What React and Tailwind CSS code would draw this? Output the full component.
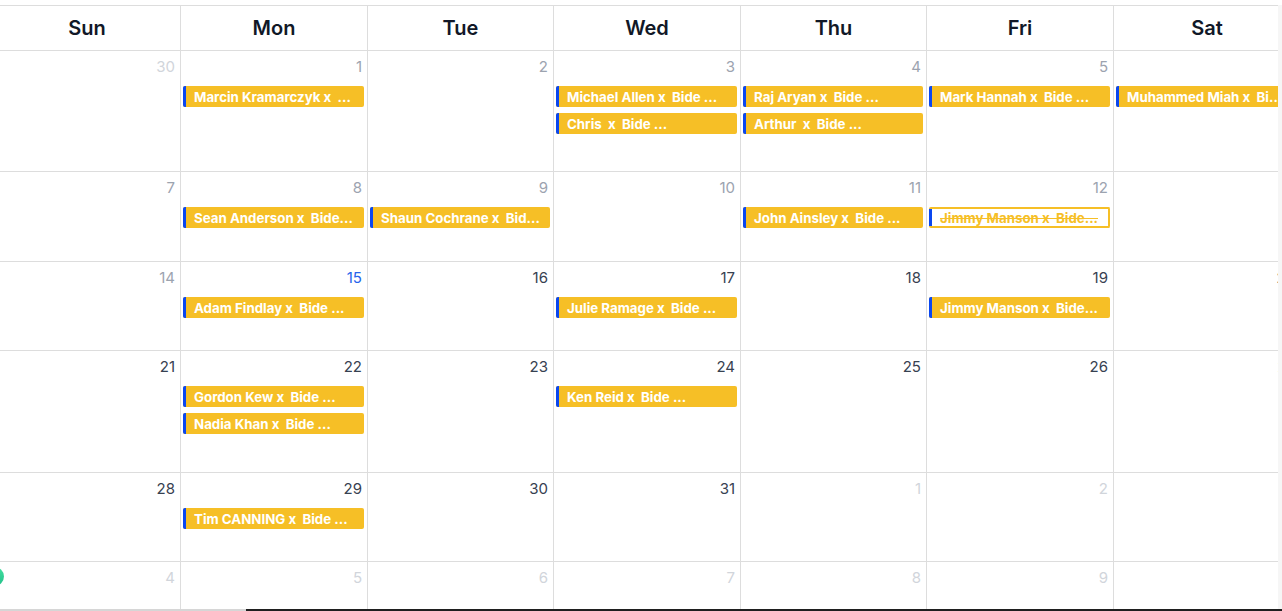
import React from "react";

const DAYS = ["Sun", "Mon", "Tue", "Wed", "Thu", "Fri", "Sat"];

// kind: o = other month, p = past, t = today, f = future
const WEEKS = [
  {
    h: "h-[121px]",
    days: [
      { n: 30, k: "o" },
      { n: 1, k: "p", ev: ["Marcin Kramarczyk x  ..."] },
      { n: 2, k: "p" },
      { n: 3, k: "p", ev: ["Michael Allen x  Bide ...", "Chris  x  Bide ..."] },
      { n: 4, k: "p", ev: ["Raj Aryan x  Bide ...", "Arthur  x  Bide ..."] },
      { n: 5, k: "p", ev: ["Mark Hannah x  Bide ..."] },
      { n: 6, k: "p", ev: ["Muhammed Miah x  Bi.."] },
    ],
  },
  {
    h: "h-[90px]",
    days: [
      { n: 7, k: "p" },
      { n: 8, k: "p", ev: ["Sean Anderson x  Bide..."] },
      { n: 9, k: "p", ev: ["Shaun Cochrane x  Bid..."] },
      { n: 10, k: "p" },
      { n: 11, k: "p", ev: ["John Ainsley x  Bide ..."] },
      { n: 12, k: "p", ev: [{ t: "Jimmy Manson x  Bide...", x: true }] },
      { n: 13, k: "p" },
    ],
  },
  {
    h: "h-[89px]",
    days: [
      { n: 14, k: "p" },
      { n: 15, k: "t", ev: ["Adam Findlay x  Bide ..."] },
      { n: 16, k: "f" },
      { n: 17, k: "f", ev: ["Julie Ramage x  Bide ..."] },
      { n: 18, k: "f" },
      { n: 19, k: "f", ev: ["Jimmy Manson x  Bide..."] },
      { n: 20, k: "f" },
    ],
  },
  {
    h: "h-[122px]",
    days: [
      { n: 21, k: "f" },
      { n: 22, k: "f", ev: ["Gordon Kew x  Bide ...", "Nadia Khan x  Bide ..."] },
      { n: 23, k: "f" },
      { n: 24, k: "f", ev: ["Ken Reid x  Bide ..."] },
      { n: 25, k: "f" },
      { n: 26, k: "f" },
      { n: 27, k: "f" },
    ],
  },
  {
    h: "h-[89px]",
    days: [
      { n: 28, k: "f" },
      { n: 29, k: "f", ev: ["Tim CANNING x  Bide ..."] },
      { n: 30, k: "f" },
      { n: 31, k: "f" },
      { n: 1, k: "o" },
      { n: 2, k: "o" },
      { n: 3, k: "o" },
    ],
  },
  {
    h: "h-[47px]",
    last: true,
    days: [
      { n: 4, k: "o" },
      { n: 5, k: "o" },
      { n: 6, k: "o" },
      { n: 7, k: "o" },
      { n: 8, k: "o" },
      { n: 9, k: "o" },
      { n: 10, k: "o" },
    ],
  },
];

const numColor = {
  o: "text-[#d1d5db]",
  p: "text-[#9ca3af]",
  t: "text-[#2563eb]",
  f: "text-[#374151]",
};

const COLS = "grid-cols-[187px_187px_186px_187px_186px_187px_187px]";

function Event({ e }) {
  const struck = typeof e === "object" && e.x;
  const text = typeof e === "object" ? e.t : e;
  if (struck) {
    return (
      <div className="ml-[2px] mr-[3px] flex h-[21px] overflow-hidden rounded-[2px] border-2 border-l-0 border-[#f6bf26] bg-white">
        <div className="w-[3px] shrink-0 bg-[#0a47f0]" />
        <div className="overflow-hidden whitespace-pre pl-[8px] text-[13.3px] font-bold leading-[19px] text-[#f6bf26] line-through">
          {text}
        </div>
      </div>
    );
  }
  return (
    <div className="ml-[2px] mr-[3px] flex h-[21px] overflow-hidden rounded-[2px] bg-[#f6bf26]">
      <div className="w-[3px] shrink-0 bg-[#0a47f0]" />
      <div className="overflow-hidden whitespace-pre pl-[8px] text-[13.3px] font-bold leading-[22px] text-white">
        {text}
      </div>
    </div>
  );
}

export default function App() {
  return (
    <div
      className="relative h-[611px] w-full overflow-hidden bg-white"
      style={{ fontFamily: "Inter, 'Liberation Sans', sans-serif" }}
    >
      <div className="flex pt-[5px]">
        <div className="w-[1278px] overflow-hidden">
          <div className="ml-[-7px] w-[1307px]">
            {/* header */}
            <div className={`grid h-[46px] ${COLS} border-y border-[#dddddd]`}>
              {DAYS.map((d) => (
                <div
                  key={d}
                  className="flex items-center justify-center border-l border-[#dddddd] text-[20px] font-semibold text-[#111827]"
                >
                  {d}
                </div>
              ))}
            </div>
            {WEEKS.map((w, wi) => (
              <div
                key={wi}
                className={`grid ${COLS} ${w.h} ${w.last ? "" : "border-b border-[#dddddd]"}`}
              >
                {w.days.map((d, di) => (
                  <div key={di} className="flex flex-col border-l border-[#dddddd]">
                    <div
                      className={`mb-[8px] pr-[5px] pt-[5px] text-right text-[15px] leading-[22px] ${numColor[d.k]}`}
                    >
                      {d.n}
                    </div>
                    <div className="flex flex-col gap-[6px]">
                      {(d.ev || []).map((e, ei) => (
                        <Event key={ei} e={e} />
                      ))}
                    </div>
                  </div>
                ))}
              </div>
            ))}
          </div>
        </div>
        <div className="w-[4px] bg-[#f6f6f6]" />
      </div>
      <div className="flex h-[2px]">
        <div className="w-[246px] bg-[#d6d6d6]" />
        <div className="flex-1 bg-[#1f1f1f]" />
      </div>
      <div className="absolute left-[-15px] top-[567px] h-[19px] w-[19px] rounded-full bg-gradient-to-b from-[#43e0a0] to-[#22c08a]" />
    </div>
  );
}
